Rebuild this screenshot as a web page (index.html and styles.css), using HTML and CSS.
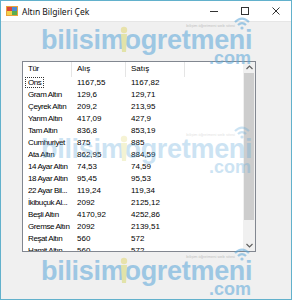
FILE: index.html
```html
<!DOCTYPE html>
<html lang="tr">
<head>
<meta charset="utf-8">
<title>Altın Bilgileri Çek</title>
<link rel="stylesheet" href="styles.css">
</head>
<body>
<div class="window">
  <div class="titlebar">
    <svg class="app-icon" width="12" height="12" viewBox="0 0 12 12">
      <rect x="0" y="1" width="12" height="10" fill="#e9a23b"/>
      <rect x="1" y="2" width="5" height="4" fill="#d9443a"/>
      <rect x="6" y="2" width="5" height="4" fill="#4a8bd6"/>
      <rect x="1" y="6" width="5" height="4" fill="#f2d14b"/>
      <rect x="6" y="6" width="5" height="4" fill="#5cae4e"/>
    </svg>
    <span class="title">Altın Bilgileri Çek</span>
    <div class="controls">
      <div class="ctl"><svg width="10" height="10" viewBox="0 0 10 10"><line x1="1" y1="5.5" x2="9" y2="5.5" stroke="#333" stroke-width="1"/></svg></div>
      <div class="ctl"><svg width="10" height="10" viewBox="0 0 10 10"><rect x="1.5" y="1.5" width="7" height="7" fill="none" stroke="#333" stroke-width="1"/></svg></div>
      <div class="ctl"><svg width="10" height="10" viewBox="0 0 10 10"><path d="M1.5 1.5 L8.5 8.5 M8.5 1.5 L1.5 8.5" stroke="#333" stroke-width="1"/></svg></div>
    </div>
  </div>

  <div class="client">
    <div class="listview">
      <div class="lv-main">
        <div class="lv-head">
          <span class="c1">Tür</span><span class="c2">Alış</span><span class="c3">Satış</span>
        </div>
        <div class="lv-row"><span class="c1"><span class="focus">Ons</span></span><span class="c2">1167,55</span><span class="c3">1167,82</span></div>
        <div class="lv-row"><span class="c1">Gram Altın</span><span class="c2">129,6</span><span class="c3">129,71</span></div>
        <div class="lv-row"><span class="c1">Çeyrek Altın</span><span class="c2">209,2</span><span class="c3">213,95</span></div>
        <div class="lv-row"><span class="c1">Yarım Altın</span><span class="c2">417,09</span><span class="c3">427,9</span></div>
        <div class="lv-row"><span class="c1">Tam Altın</span><span class="c2">836,8</span><span class="c3">853,19</span></div>
        <div class="lv-row"><span class="c1">Cumhuriyet</span><span class="c2">875</span><span class="c3">885</span></div>
        <div class="lv-row"><span class="c1">Ata Altın</span><span class="c2">862,95</span><span class="c3">884,59</span></div>
        <div class="lv-row"><span class="c1">14 Ayar Altın</span><span class="c2">74,53</span><span class="c3">74,59</span></div>
        <div class="lv-row"><span class="c1">18 Ayar Altın</span><span class="c2">95,45</span><span class="c3">95,53</span></div>
        <div class="lv-row"><span class="c1">22 Ayar Bil...</span><span class="c2">119,24</span><span class="c3">119,34</span></div>
        <div class="lv-row"><span class="c1">İkibuçuk Al...</span><span class="c2">2092</span><span class="c3">2125,12</span></div>
        <div class="lv-row"><span class="c1">Beşli Altın</span><span class="c2">4170,92</span><span class="c3">4252,86</span></div>
        <div class="lv-row"><span class="c1">Gremse Altın</span><span class="c2">2092</span><span class="c3">2139,51</span></div>
        <div class="lv-row"><span class="c1">Reşat Altın</span><span class="c2">560</span><span class="c3">572</span></div>
        <div class="lv-row"><span class="c1">Hamit Altın</span><span class="c2">560</span><span class="c3">572</span></div>
      </div>
      <div class="scrollbar">
        <div class="sb-btn"><svg width="7" height="5" viewBox="0 0 7 5"><path d="M0.5 4 L3.5 1 L6.5 4" fill="none" stroke="#606060" stroke-width="1.2"/></svg></div>
        <div class="sb-track"><div class="sb-thumb"></div></div>
        <div class="sb-btn"><svg width="7" height="5" viewBox="0 0 7 5"><path d="M0.5 1 L3.5 4 L6.5 1" fill="none" stroke="#606060" stroke-width="1.2"/></svg></div>
      </div>
    </div>
  </div>

  <div class="wm wm-top">
    <span class="wm-tag">bilişim öğretmeni web sitesi</span>
    <span class="wm-word">bilisim<span class="wm-o">o</span>gretmeni</span>
    <span class="wm-com">.com</span>
    <svg class="wm-wifi" width="16" height="14" viewBox="0 0 16 14"><path d="M1 6 Q8 -1 15 6" fill="none" stroke="#5aa6d9" stroke-width="2.2"/><path d="M4 9 Q8 5 12 9" fill="none" stroke="#5aa6d9" stroke-width="2.2"/><circle cx="8" cy="12" r="1.6" fill="#5aa6d9"/></svg>
    <svg class="wm-man" width="10" height="26" viewBox="0 0 10 26"><circle cx="5" cy="4" r="3.2" fill="#e3d873"/><path d="M2 8 h6 l-1 18 h-4 z" fill="#d8d970"/></svg>
  </div>
  <div class="wm wm-mid">
    <span class="wm-tag">bilişim öğretmeni web sitesi</span>
    <span class="wm-word">bilisim<span class="wm-o">o</span>gretmeni</span>
    <span class="wm-com">.com</span>
    <svg class="wm-wifi" width="16" height="14" viewBox="0 0 16 14"><path d="M1 6 Q8 -1 15 6" fill="none" stroke="#5aa6d9" stroke-width="2.2"/><path d="M4 9 Q8 5 12 9" fill="none" stroke="#5aa6d9" stroke-width="2.2"/><circle cx="8" cy="12" r="1.6" fill="#5aa6d9"/></svg>
    <svg class="wm-man" width="10" height="26" viewBox="0 0 10 26"><circle cx="5" cy="4" r="3.2" fill="#e3d873"/><path d="M2 8 h6 l-1 18 h-4 z" fill="#d8d970"/></svg>
  </div>
  <div class="wm wm-bot">
    <span class="wm-tag">bilişim öğretmeni web sitesi</span>
    <span class="wm-word">bilisim<span class="wm-o">o</span>gretmeni</span>
    <span class="wm-com">.com</span>
    <svg class="wm-wifi" width="16" height="14" viewBox="0 0 16 14"><path d="M1 6 Q8 -1 15 6" fill="none" stroke="#5aa6d9" stroke-width="2.2"/><path d="M4 9 Q8 5 12 9" fill="none" stroke="#5aa6d9" stroke-width="2.2"/><circle cx="8" cy="12" r="1.6" fill="#5aa6d9"/></svg>
    <svg class="wm-man" width="10" height="26" viewBox="0 0 10 26"><circle cx="5" cy="4" r="3.2" fill="#e3d873"/><path d="M2 8 h6 l-1 18 h-4 z" fill="#d8d970"/></svg>
  </div>
</div>
</body>
</html>
```

FILE: styles.css
```css
body {margin: 0; background: #fff; font-family: "Liberation Sans", Arial, sans-serif;}

.window {position: relative; width: 292px; height: 300px; box-sizing: border-box; border: 1px solid #62b1cc; display: flex; flex-direction: column; overflow: hidden;}

.titlebar {height: 21px; flex: none; display: flex; align-items: center; background: #fff; border-bottom: 1px solid #e6e6e6; box-sizing: border-box;}
.app-icon {margin-left: 5px; margin-right: 4px;}
.title {font-family: "Noto Sans", sans-serif; font-size: 8.5px; color: #111;}
.controls {margin-left: auto; display: flex; height: 100%;}
.ctl {width: 31px; display: flex; align-items: center; justify-content: center;}

.client {flex: 1; background: #f0f0f0; padding: 39px 0 0 21px;}

.listview {width: 234px; height: 191px; box-sizing: border-box; border: 1px solid #828790; background: #fff; display: flex; overflow: hidden;}
.lv-main {flex: 1; overflow: hidden; font-size: 8px; color: #000;}
.lv-head, .lv-row {display: flex; white-space: nowrap;}
.lv-head {height: 15px; align-items: center;}
.lv-row {height: 12px; line-height: 12px;}
.lv-head span {height: 15px; line-height: 14px; border-right: 1px solid #e5e5e5; box-sizing: border-box;}
.c1 {width: 49px; padding-left: 5px; box-sizing: border-box; overflow: hidden; text-overflow: clip; letter-spacing: -0.4px;}
.c2 {width: 54px; padding-left: 5px; box-sizing: border-box;}
.c3 {width: 59px; padding-left: 5px; box-sizing: border-box;}
.focus {outline: 1px dotted #333; outline-offset: 0; padding: 0 2px; margin-left: -2px;}

.scrollbar {width: 12px; background: #f0f0f0; display: flex; flex-direction: column;}
.sb-btn {height: 11px; display: flex; align-items: center; justify-content: center;}
.sb-track {flex: 1; padding: 0 1px;}
.sb-thumb {height: 147px; background: #cdcdcd;}

.wm {position: absolute; left: 40px; width: 212px; display: flex; flex-direction: column; pointer-events: none; color: #5aa6d9;}
.wm-top {top: 22px; opacity: 0.55;}
.wm-mid {top: 131px; opacity: 0.3;}
.wm-bot {top: 253px; opacity: 0.55;}
.wm-tag {align-self: flex-end; margin-right: 18px; font-size: 4px; color: #999; height: 5px; line-height: 5px;}
.wm-word {font-weight: bold; font-size: 27px; line-height: 24px; letter-spacing: -0.3px; height: 24px;}
.wm-com {align-self: flex-end; font-weight: bold; font-size: 18px; line-height: 12px; margin-right: 2px;}
.wm-wifi {position: absolute; right: 3px; top: -7px;}
.wm-man {position: absolute; left: 78px; top: 3px;}
```
